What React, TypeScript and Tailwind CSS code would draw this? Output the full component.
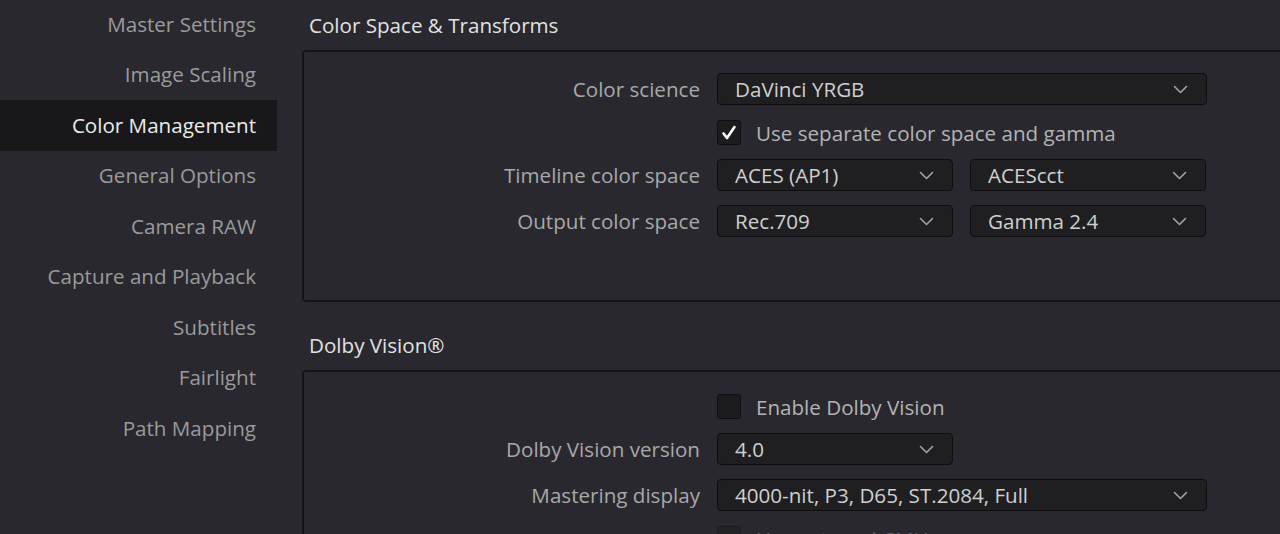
import type { ReactNode } from "react";

const NAV = [
  "Master Settings",
  "Image Scaling",
  "Color Management",
  "General Options",
  "Camera RAW",
  "Capture and Playback",
  "Subtitles",
  "Fairlight",
  "Path Mapping",
];

export default function App() {
  return (
    <div
      className="flex h-[534px] w-[1280px] overflow-hidden bg-[#28282e] text-[20.6px]"
      style={{ fontFamily: '"Open Sans", "Noto Sans", sans-serif' }}
    >
      {/* settings nav */}
      <nav className="-mt-[1px] flex w-[277px] shrink-0 flex-col">
        {NAV.map((name) => (
          <div
            key={name}
            className={`flex h-[50.5px] items-center justify-end pr-[21px] ${
              name === "Color Management"
                ? "bg-[#18181a] text-[#ececec]"
                : "text-[#9b9b9b]"
            }`}
          >
            {name}
          </div>
        ))}
      </nav>

      <main className="min-w-0 flex-1 pl-[25px]">
        <SectionTitle>Color Space &amp; Transforms</SectionTitle>
        <Panel className="h-[252px] pt-[21px]">
          <Row label="Color science">
            <Select value="DaVinci YRGB" wide />
          </Row>
          <Row label="" className="mt-[12px]">
            <Check checked label="Use separate color space and gamma" />
          </Row>
          <Row label="Timeline color space" className="mt-[10px]">
            <Select value="ACES (AP1)" />
            <Select value="ACEScct" />
          </Row>
          <Row label="Output color space" className="mt-[14px]">
            <Select value="Rec.709" />
            <Select value="Gamma 2.4" />
          </Row>
        </Panel>

        <div className="mt-[18px]">
          <SectionTitle>Dolby Vision®</SectionTitle>
        </div>
        <Panel className="h-[200px] pt-[19px]">
          <Row label="">
            <Check label="Enable Dolby Vision" />
          </Row>
          <Row label="Dolby Vision version" className="mt-[10px]">
            <Select value="4.0" />
          </Row>
          <Row label="Mastering display" className="mt-[14px]">
            <Select value="4000-nit, P3, D65, ST.2084, Full" wide />
          </Row>
          <Row label="" className="mt-[12px]">
            <Check label="Use external CMU" dim />
          </Row>
        </Panel>
      </main>
    </div>
  );
}

function SectionTitle({ children }: { children: ReactNode }) {
  return (
    <div className="flex h-[50px] items-center pl-[7px] text-[#e2e2e2]">
      {children}
    </div>
  );
}

function Panel({
  children,
  className = "",
}: {
  children: ReactNode;
  className?: string;
}) {
  return (
    <div
      className={`mr-[-20px] rounded-[4px] border-2 border-[#141416] ${className}`}
    >
      {children}
    </div>
  );
}

function Row({
  label,
  children,
  className = "",
}: {
  label: string;
  children: ReactNode;
  className?: string;
}) {
  return (
    <div className={`flex h-[32px] items-center ${className}`}>
      <div className="w-[396px] shrink-0 text-right text-[#a9a9a9]">
        {label}
      </div>
      <div className="ml-[17px] flex gap-[17px]">{children}</div>
    </div>
  );
}

function Select({ value, wide }: { value: string; wide?: boolean }) {
  return (
    <div
      className={`flex h-[32px] items-center justify-between rounded-[4px] border border-[#0e0e10] bg-[#1f1f22] pl-[17px] pr-[18px] text-[#cfcfcf] ${
        wide ? "w-[490px]" : "w-[236px]"
      }`}
    >
      <span className="truncate">{value}</span>
      <svg
        width="15"
        height="9"
        viewBox="0 0 15 9"
        fill="none"
        stroke="#a3a3a3"
        strokeWidth="1.6"
        strokeLinecap="round"
        strokeLinejoin="round"
        aria-hidden
      >
        <path d="M1.5 1.5l6 6 6-6" />
      </svg>
    </div>
  );
}

function Check({
  label,
  checked,
  dim,
}: {
  label: string;
  checked?: boolean;
  dim?: boolean;
}) {
  return (
    <div className={`flex items-center gap-[15px] ${dim ? "opacity-40" : ""}`}>
      <div className="flex h-[25px] w-[24px] items-center justify-center rounded-[3px] border border-[#0e0e10] bg-[#1c1c1f]">
        {checked && (
          <svg
            width="16"
            height="16"
            viewBox="0 0 16 16"
            fill="none"
            stroke="#ffffff"
            strokeWidth="2.6"
            strokeLinecap="round"
            strokeLinejoin="round"
            aria-hidden
          >
            <path d="M2.5 8.5l3.5 4.5 7.5-11" />
          </svg>
        )}
      </div>
      <span className="text-[#b4b4b4]">{label}</span>
    </div>
  );
}
